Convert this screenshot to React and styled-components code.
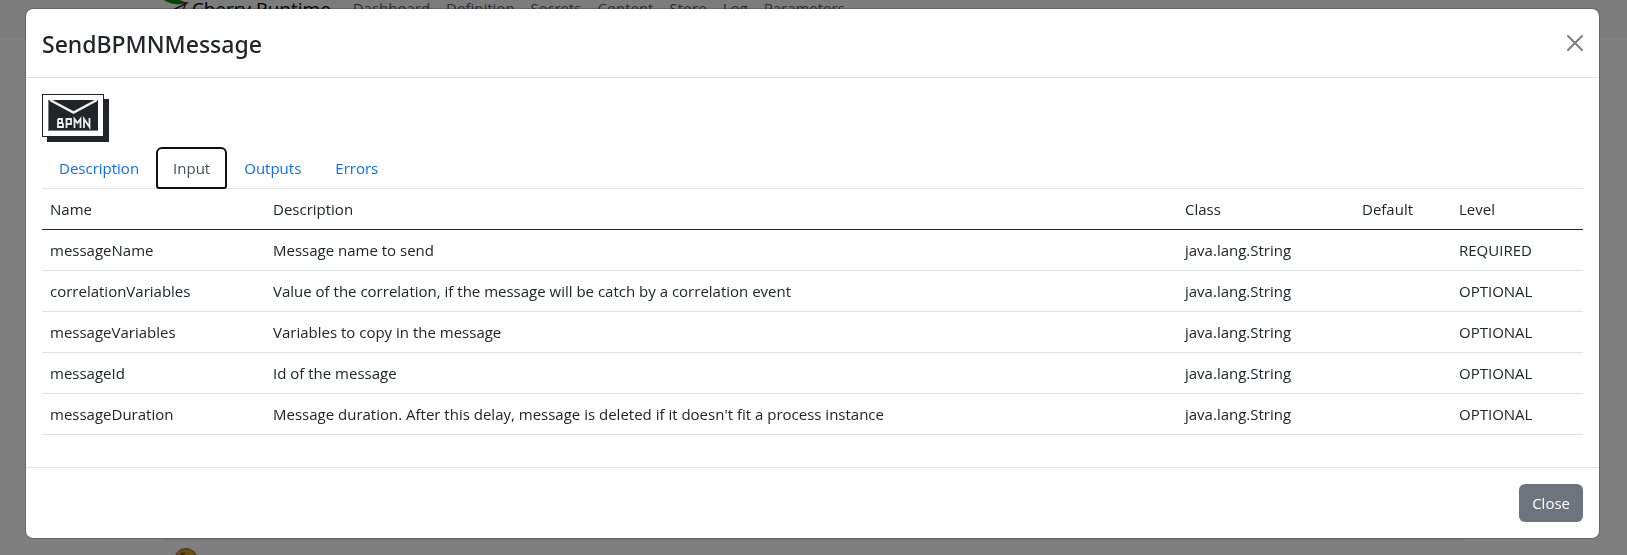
import React from 'react';
import styled, { createGlobalStyle, css } from 'styled-components';

const GlobalStyle = createGlobalStyle`
  *, *::before, *::after { box-sizing: border-box; }
  html { height: 100%; overflow: hidden; }
  body {
    margin: 0;
    height: 100%;
    overflow: hidden;
    background: #fff;
    color: #212529;
    font-family: "Open Sans", "Noto Sans", sans-serif;
    font-size: 15px;
    font-weight: 400;
    line-height: 24px;
  }
  #root { height: 100%; }
`;

const Page = styled.div`
  display: flex;
  flex-direction: column;
  justify-content: space-between;
  height: 100%;
`;

const Navbar = styled.nav`
  display: flex;
  align-items: flex-start;
  height: 38px;
  padding-left: 10%;
  background: #f8f9fa;
`;

const Brand = styled.a`
  display: flex;
  align-items: flex-start;
  width: 182px;
  height: 20px;
  color: #000;
  font-size: 19px;
  line-height: 18px;
  text-decoration: none;
  white-space: nowrap;
`;

const NavLink = styled.a`
  padding: 0 8px;
  color: #595959;
  line-height: 16px;
  text-decoration: none;
`;

const RunnerList = styled.main`
  height: 16px;
  margin: 0 10%;
  padding: 8px 0 0 12px;
  border-top: 1px solid #dee2e6;
  overflow: hidden;
`;

const Overlay = styled.div`
  position: fixed;
  inset: 0;
  padding: 8px 27px 0 25px;
  background: rgba(0, 0, 0, 0.5);
`;

const Dialog = styled.section`
  border: 1px solid rgba(0, 0, 0, 0.18);
  border-radius: 8px;
  background: #fff;
  background-clip: padding-box;
`;

const DialogHeader = styled.header`
  display: flex;
  align-items: center;
  justify-content: space-between;
  height: 69px;
  padding: 0 16px;
  border-bottom: 1px solid #dee2e6;
`;

const Title = styled.h1`
  margin: 0;
  padding-top: 2px;
  font-family: "Noto Sans", "Open Sans", sans-serif;
  font-size: 23px;
  font-weight: 500;
  line-height: 36px;
`;

const IconButton = styled.button`
  display: flex;
  padding: 0;
  border: 0;
  background: none;
  color: #7f7f7f;
`;

const DialogBody = styled.div`
  padding: 16px 16px 32px;
`;

const Logo = styled.svg`
  display: block;
  margin-bottom: 5px;
`;

const Tabs = styled.div`
  display: flex;
  height: 42px;
  border-bottom: 1px solid #dee2e6;
`;

const Tab = styled.button`
  height: 42px;
  padding: 0 17px;
  border: 0;
  background: none;
  color: #0d6efd;
  font: inherit;
  ${({ $active }) => $active && css`
    border: 2px solid #101010;
    border-radius: 6px 6px 3px 3px;
    padding: 0 15px;
    background: #fff;
    color: #495057;
  `}
`;

const Table = styled.table`
  width: 100%;
  table-layout: fixed;
  border-collapse: separate;
  border-spacing: 0;
`;

const Col = styled.col`
  width: ${({ $width }) => $width};
`;

const HeadCell = styled.th`
  height: 41px;
  padding: 0 8px;
  border-bottom: 1px solid #212529;
  text-align: left;
  font-weight: inherit;
`;

const Cell = styled.td`
  height: 41px;
  padding: 0 8px;
  border-bottom: 1px solid #dee2e6;
`;

const DialogFooter = styled.footer`
  display: flex;
  justify-content: flex-end;
  padding: 16px;
  border-top: 1px solid #dee2e6;
`;

const CloseButton = styled.button`
  height: 38px;
  padding: 0 13px;
  border: 0;
  border-radius: 6px;
  background: #6c757d;
  color: #fff;
  font: inherit;
`;

const links = ['Dashboard', 'Definition', 'Secrets', 'Content', 'Store', 'Log', 'Parameters'];
const tabs = ['Description', 'Input', 'Outputs', 'Errors'];
const columns = [
  ['Name', '223px'],
  ['Description', 'auto'],
  ['Class', '177px'],
  ['Default', '97px'],
  ['Level', '132px'],
];
const inputs = [
  ['messageName', 'Message name to send', 'java.lang.String', '', 'REQUIRED'],
  ['correlationVariables', 'Value of the correlation, if the message will be catch by a correlation event', 'java.lang.String', '', 'OPTIONAL'],
  ['messageVariables', 'Variables to copy in the message', 'java.lang.String', '', 'OPTIONAL'],
  ['messageId', 'Id of the message', 'java.lang.String', '', 'OPTIONAL'],
  ['messageDuration', "Message duration. After this delay, message is deleted if it doesn't fit a process instance", 'java.lang.String', '', 'OPTIONAL'],
];

function CherryIcon() {
  return (
    <svg width="29" height="12" viewBox="0 0 29 12" aria-hidden="true">
      <path d="M1 0H17L22 3Q17 5 12 4Q5 3 1 0Z" fill="#008a00" />
      <path d="M18 2L24 3L10 10M23 3L20 10" fill="none" stroke="#3c2c24" strokeWidth="1.5" />
    </svg>
  );
}

function MessageLogo() {
  return (
    <Logo width="67" height="48" viewBox="0 0 67 48" role="img" aria-label="BPMN message">
      <rect x="5" y="5" width="62" height="43" fill="#212529" />
      <rect x="0.5" y="0.5" width="61" height="42" fill="#fff" stroke="#212529" />
      <rect x="6" y="6" width="50" height="31" fill="#212529" />
      <path d="M8 6L31.500 18.500L55 6" fill="none" stroke="#f0f0f0" strokeWidth="2.500" />
      <path d="M6.500 6V36.500H56" fill="none" stroke="#777b7f" />
      <g fill="none" stroke="#eee" strokeWidth="1.800">
        <path d="M16 25H20V28.500L21 30V33H16V25M16 29H20" />
        <path d="M24.500 34V25H29V30H24.500" />
        <path d="M32.500 34V25L35.500 29L38.500 25V34" />
        <path d="M42 34V25L47.500 33V24" />
      </g>
    </Logo>
  );
}

function RunnerIcon() {
  return (
    <svg width="24" height="24" viewBox="0 0 24 24" aria-hidden="true">
      <circle cx="11" cy="12" r="11.500" fill="#d19a2a" stroke="#86662c" />
      <path d="M5 5L11 4L9 7Z" fill="#2c8a2c" />
      <circle cx="7" cy="7" r="1.500" fill="#b02a1c" />
    </svg>
  );
}

export default function App() {
  return (
    <>
      <GlobalStyle />
      <Page>
        <Navbar>
          <Brand href="#home"><CherryIcon />Cherry Runtime</Brand>
          {links.map((name) => <NavLink key={name} href={`#${name}`}>{name}</NavLink>)}
        </Navbar>
        <RunnerList><RunnerIcon /></RunnerList>
      </Page>
      <Overlay>
        <Dialog role="dialog" aria-modal="true" aria-labelledby="dialog-title">
          <DialogHeader>
            <Title id="dialog-title">SendBPMNMessage</Title>
            <IconButton type="button" aria-label="Close dialog">
              <svg width="16" height="16" viewBox="0 0 16 16" aria-hidden="true">
                <path d="M1 1L15 15M15 1L1 15" stroke="currentColor" strokeWidth="2" strokeLinecap="round" />
              </svg>
            </IconButton>
          </DialogHeader>
          <DialogBody>
            <MessageLogo />
            <Tabs role="tablist">
              {tabs.map((name) => (
                <Tab key={name} type="button" role="tab" aria-selected={name === 'Input'} $active={name === 'Input'}>
                  {name}
                </Tab>
              ))}
            </Tabs>
            <Table>
              <colgroup>
                {columns.map(([name, width]) => <Col key={name} $width={width} />)}
              </colgroup>
              <thead>
                <tr>{columns.map(([name]) => <HeadCell key={name} scope="col">{name}</HeadCell>)}</tr>
              </thead>
              <tbody>
                {inputs.map((row) => (
                  <tr key={row[0]}>
                    {row.map((value, i) => <Cell key={columns[i][0]}>{value}</Cell>)}
                  </tr>
                ))}
              </tbody>
            </Table>
          </DialogBody>
          <DialogFooter>
            <CloseButton type="button">Close</CloseButton>
          </DialogFooter>
        </Dialog>
      </Overlay>
    </>
  );
}
